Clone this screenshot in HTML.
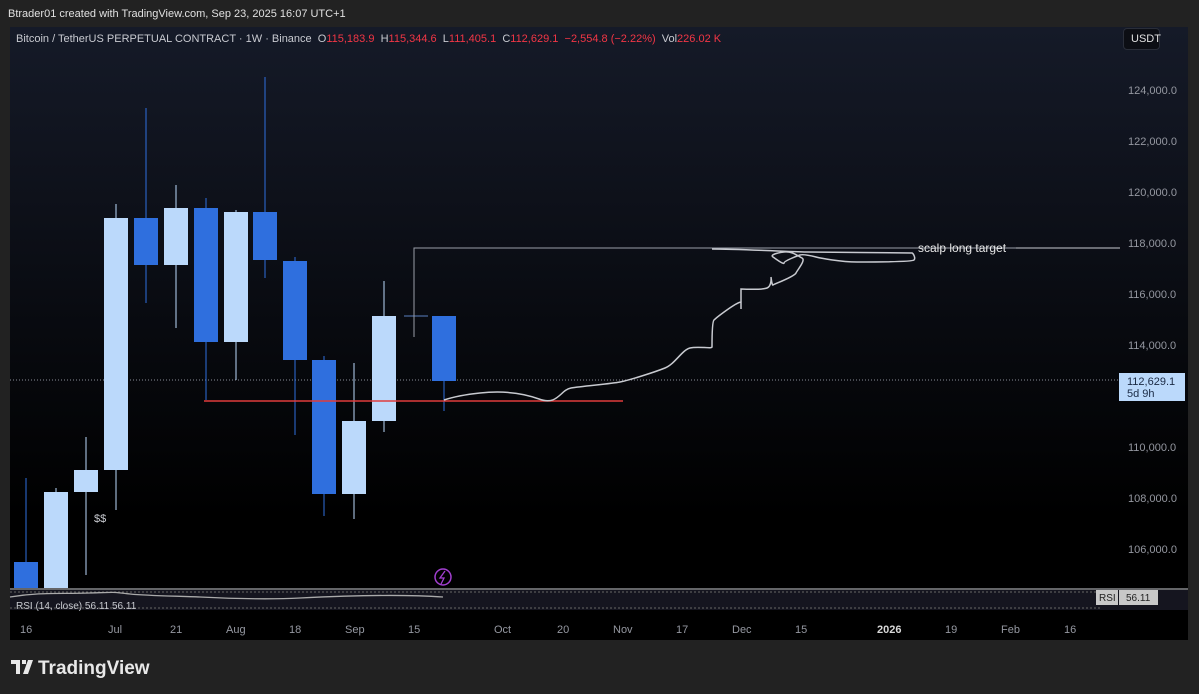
<!DOCTYPE html>
<html><head><meta charset="utf-8"><style>
*{margin:0;padding:0;box-sizing:border-box}
body{width:1199px;height:694px;background:#222222;font-family:"Liberation Sans",sans-serif;position:relative;overflow:hidden;color:#d1d4dc}
.t{position:absolute;white-space:nowrap}
#chart{position:absolute;left:10px;top:27px;width:1178px;height:613px;background:linear-gradient(#151a28,#000 80%);}
</style></head><body>
<div class="t" style="left:8px;top:8px;font-size:11px;color:#e0e0e0">Btrader01 created with TradingView.com, Sep 23, 2025 16:07 UTC+1</div>
<div id="chart"></div>
<div class="t" style="left:16px;top:33px;font-size:11px;color:#c8cad0">Bitcoin / TetherUS PERPETUAL CONTRACT · 1W · Binance &nbsp;O<span style="color:#f23645">115,183.9</span> &nbsp;H<span style="color:#f23645">115,344.6</span> &nbsp;L<span style="color:#f23645">111,405.1</span> &nbsp;C<span style="color:#f23645">112,629.1</span> &nbsp;<span style="color:#f23645">−2,554.8 (−2.22%)</span> &nbsp;Vol<span style="color:#f23645">226.02 K</span></div>
<div class="t" style="left:1123px;top:28px;width:37px;height:22px;background:#0c0e14;border:1px solid #2a2e39;border-radius:4px;font-size:11px;color:#e0e0e0;padding:4px 0 0 7px">USDT</div>
<svg style="position:absolute;left:0;top:0" width="1199" height="694">
<g fill="#9598a1" font-size="11" font-family="Liberation Sans">
<text x="1128" y="94">124,000.0</text><text x="1128" y="145">122,000.0</text><text x="1128" y="196">120,000.0</text><text x="1128" y="247">118,000.0</text><text x="1128" y="298">116,000.0</text><text x="1128" y="349">114,000.0</text><text x="1128" y="451">110,000.0</text><text x="1128" y="502">108,000.0</text><text x="1128" y="553">106,000.0</text>
</g>
<line x1="10" y1="380" x2="1118" y2="380" stroke="#8a8f99" stroke-dasharray="1,2"/>
<rect x="1119" y="373" width="66" height="28" fill="#bbd9fb"/>
<text x="1127" y="385" font-size="11" fill="#1a2a44">112,629.1</text>
<text x="1127" y="397" font-size="11" fill="#1a2a44">5d 9h</text>
<g stroke-width="1">
<line x1="26" y1="478" x2="26" y2="562" stroke="#2f6fde"/><rect x="14" y="562" width="24" height="26" fill="#2f6fde"/>
<line x1="56" y1="488" x2="56" y2="588" stroke="#bbd9fb"/><rect x="44" y="492" width="24" height="96" fill="#bbd9fb"/>
<line x1="86" y1="437" x2="86" y2="575" stroke="#bbd9fb"/><rect x="74" y="470" width="24" height="22" fill="#bbd9fb"/>
<line x1="116" y1="204" x2="116" y2="510" stroke="#bbd9fb"/><rect x="104" y="218" width="24" height="252" fill="#bbd9fb"/>
<line x1="146" y1="108" x2="146" y2="303" stroke="#2f6fde"/><rect x="134" y="218" width="24" height="47" fill="#2f6fde"/>
<line x1="176" y1="185" x2="176" y2="328" stroke="#bbd9fb"/><rect x="164" y="208" width="24" height="57" fill="#bbd9fb"/>
<line x1="206" y1="198" x2="206" y2="400" stroke="#2f6fde"/><rect x="194" y="208" width="24" height="134" fill="#2f6fde"/>
<line x1="236" y1="210" x2="236" y2="380" stroke="#bbd9fb"/><rect x="224" y="212" width="24" height="130" fill="#bbd9fb"/>
<line x1="265" y1="77" x2="265" y2="278" stroke="#2f6fde"/><rect x="253" y="212" width="24" height="48" fill="#2f6fde"/>
<line x1="295" y1="257" x2="295" y2="435" stroke="#2f6fde"/><rect x="283" y="261" width="24" height="99" fill="#2f6fde"/>
<line x1="324" y1="356" x2="324" y2="516" stroke="#2f6fde"/><rect x="312" y="360" width="24" height="134" fill="#2f6fde"/>
<line x1="354" y1="363" x2="354" y2="519" stroke="#bbd9fb"/><rect x="342" y="421" width="24" height="73" fill="#bbd9fb"/>
<line x1="384" y1="281" x2="384" y2="432" stroke="#bbd9fb"/><rect x="372" y="316" width="24" height="105" fill="#bbd9fb"/>
<line x1="444" y1="316" x2="444" y2="411" stroke="#2f6fde"/><rect x="432" y="316" width="24" height="65" fill="#2f6fde"/>
</g>
<line x1="404" y1="316" x2="428" y2="316" stroke="#5a7fc0"/>
<polyline points="414,337 414,248 1120,248" fill="none" stroke="#9a9ea8"/>
<line x1="204" y1="401" x2="623" y2="401" stroke="#e03c3c" stroke-width="1.5"/>
<path d="M444,400 C450,398 461,395 480,393 S520,392 539,399 S560,390 571,388 S610,384 620,382 S655,372 665,368 S682,350 690,348 S712,349 712,347 S712,322 714,320 S735,303 741,302 L741,309 L741,289 S762,290 767,288 S771,277 771,277 S772,286 773,285 S794,277 796,273 S806,260 802,258 S792,251 784,252 S770,255 773,257 S784,265 784,263 S797,256 800,255 S812,256 816,257 S840,262 857,262 S912,262 914,260 S913,253 912,253 S820,252 808,252 S740,249 712,249" fill="none" stroke="#c8cad0" stroke-width="1.5"/>
<text x="918" y="252" font-size="12" fill="#e8e8e8">scalp long target</text>
<line x1="1016" y1="248" x2="1120" y2="248" stroke="#c8cad0"/>
<text x="94" y="522" font-size="11" fill="#c8cad0">$$</text>
<circle cx="443" cy="577" r="8" fill="none" stroke="#a23fd0" stroke-width="1.5"/>
<path d="M445,571 L440,578 L444,578 L441,584" fill="none" stroke="#a23fd0" stroke-width="1.3"/>
<line x1="10" y1="589" x2="1188" y2="589" stroke="#c8cad0"/>
<rect x="10" y="590" width="1178" height="20" fill="#15151f"/>
<line x1="10" y1="592" x2="1100" y2="592" stroke="#666" stroke-dasharray="2,2"/>
<line x1="10" y1="608" x2="1100" y2="608" stroke="#666" stroke-dasharray="2,2"/>
<path d="M10,597 C40,592 60,594 90,593 S110,592 130,594 S180,596 200,597 S260,600 300,598 S400,594 443,597" fill="none" stroke="#aaa" stroke-width="1.3"/>
<text x="16" y="609" font-size="10" fill="#c8cad0">RSI (14, close) 56.11 56.11</text>
<rect x="1096" y="590" width="22" height="15" fill="#c8c8c8"/><text x="1099" y="601" font-size="10" fill="#222">RSI</text>
<rect x="1119" y="590" width="39" height="15" fill="#c8c8c8"/><text x="1126" y="601" font-size="10" fill="#222">56.11</text>
<g font-size="11" fill="#9598a1">
<text x="20" y="633">16</text><text x="108" y="633">Jul</text><text x="170" y="633">21</text><text x="226" y="633">Aug</text><text x="289" y="633">18</text><text x="345" y="633">Sep</text><text x="408" y="633">15</text><text x="494" y="633">Oct</text><text x="557" y="633">20</text><text x="613" y="633">Nov</text><text x="676" y="633">17</text><text x="732" y="633">Dec</text><text x="795" y="633">15</text><text x="877" y="633" fill="#d8d8d8" font-weight="bold">2026</text><text x="945" y="633">19</text><text x="1001" y="633">Feb</text><text x="1064" y="633">16</text>
</g>
<path d="M11,660 h9 v14 h-4 v-10 h-5z M22,660 h4 v4 h-4z M28,660 h5 l-5,14 h-5z" fill="#e8e8e8"/>
<text x="38" y="674" font-size="19" fill="#e8e8e8" font-weight="bold">TradingView</text>
</svg>
</body></html>
